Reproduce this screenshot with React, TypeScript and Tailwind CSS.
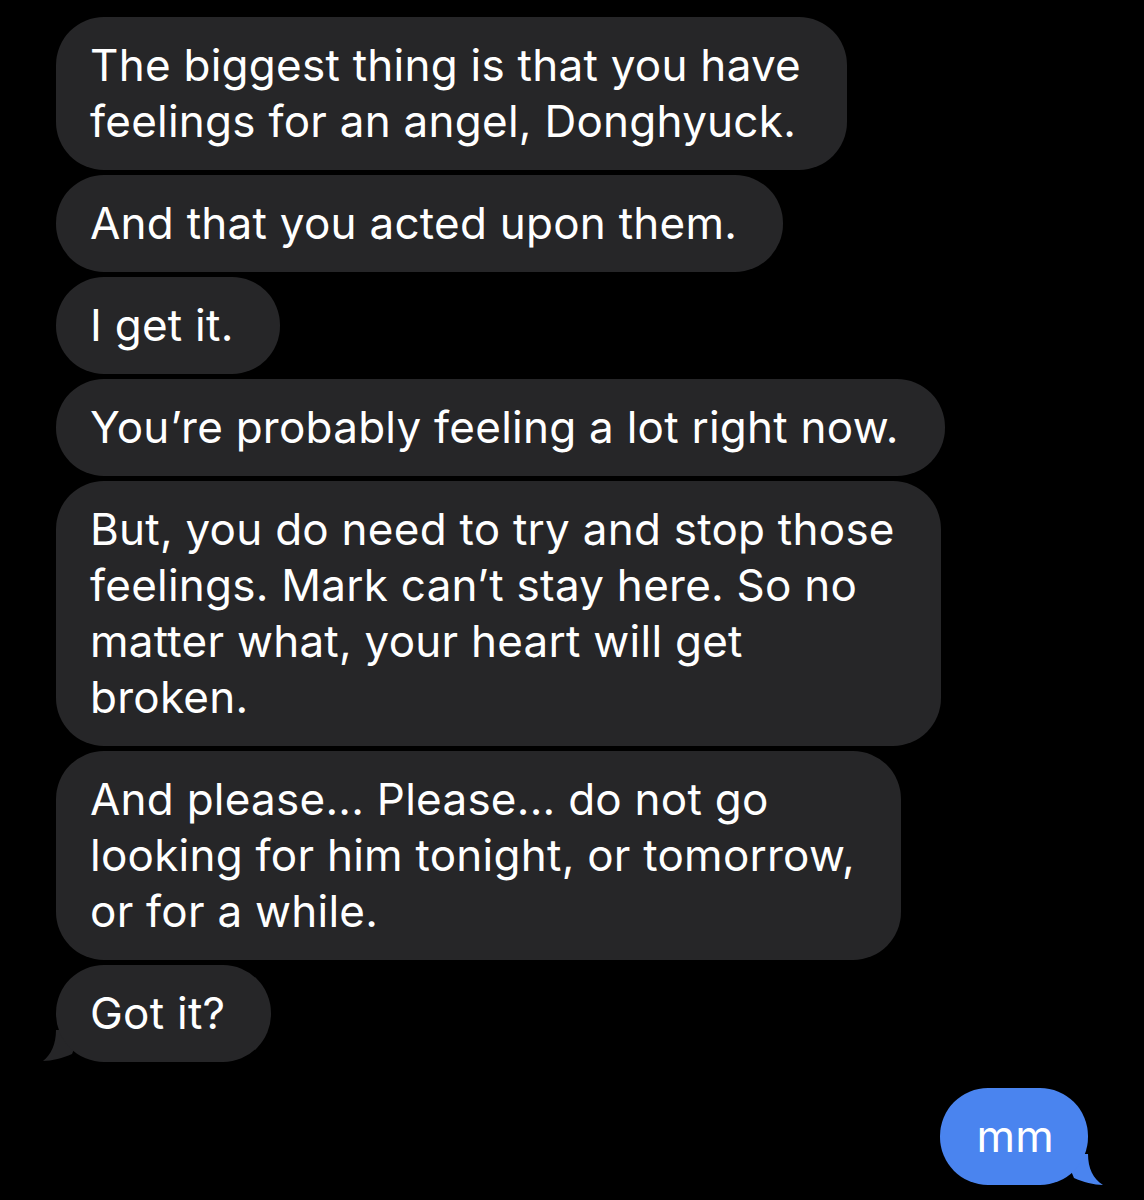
import React from 'react';

type Msg = { lines: string[]; tail?: boolean };

const messages: Msg[] = [
  { lines: ['The biggest thing is that you have', 'feelings for an angel, Donghyuck.'] },
  { lines: ['And that you acted upon them.'] },
  { lines: ['I get it.'] },
  { lines: ['You\u2019re probably feeling a lot right now.'] },
  {
    lines: [
      'But, you do need to try and stop those',
      'feelings. Mark can\u2019t stay here. So no',
      'matter what, your heart will get',
      'broken.',
    ],
  },
  {
    lines: [
      'And please... Please... do not go',
      'looking for him tonight, or tomorrow,',
      'or for a while.',
    ],
  },
  { lines: ['Got it?'], tail: true },
];

const Bubble = ({ lines, tail }: Msg) => (
  <div className="relative w-fit">
    {tail && (
      <svg
        className="absolute left-[-14px] bottom-0"
        width="40"
        height="32"
        viewBox="0 0 40 32"
      >
        <path d="M14 0 C14 14 9 25 1 31 C10 31 21 28 30 24 L40 0 Z" fill="#262628" />
      </svg>
    )}
    <div className="relative rounded-[48px] bg-[#262628] pl-[34px] pr-[46px] pt-[20px] pb-[21px] text-[44px] leading-[56px] tracking-[0.25px] text-white">
      {lines.map((l) => (
        <div key={l} className="whitespace-nowrap">{l}</div>
      ))}
    </div>
  </div>
);

export default function App() {
  return (
    <div
      className="min-h-[1200px] w-[1144px] bg-black pt-[17px]"
      style={{ fontFamily: 'Inter, "Open Sans", sans-serif' }}
    >
      <div className="flex flex-col gap-[5px] pl-[56px]">
        {messages.map((m, i) => (
          <Bubble key={i} {...m} />
        ))}
      </div>
      <div className="mt-[26px] flex justify-end pr-[56px]">
        <div className="relative">
          <svg
            className="absolute right-[-16px] bottom-[-1px]"
            width="40"
            height="32"
            viewBox="0 0 40 32"
          >
            <path d="M24 0 C24 14 29 25 39 31 C30 31 19 28 10 24 L0 0 Z" fill="#4a84ef" />
          </svg>
          <div className="relative rounded-[48px] bg-[#4a84ef] pl-[36px] pr-[34px] pt-[20px] pb-[21px] text-[44px] leading-[56px] tracking-[0.25px] text-white">
            mm
          </div>
        </div>
      </div>
    </div>
  );
}
